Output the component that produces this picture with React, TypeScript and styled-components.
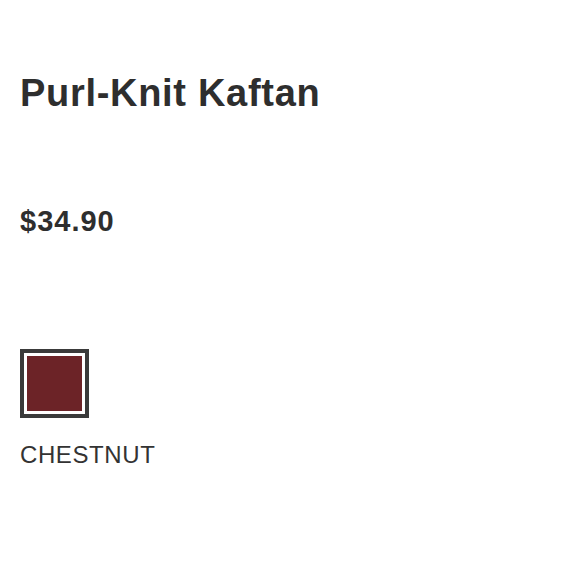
import React from "react";
import styled, { createGlobalStyle } from "styled-components";

const GlobalStyle = createGlobalStyle`
  html, body {
    margin: 0;
    padding: 0;
    background: #fff;
    font-family: "Liberation Sans", Arial, sans-serif;
    color: #333;
  }
`;

const Product = styled.div`
  display: flex;
  flex-direction: column;
  align-items: flex-start;
  padding: 74px 20px 0 20px;
`;

const Title = styled.h1`
  margin: 0;
  font-size: 38px;
  line-height: 38px;
  font-weight: 700;
  letter-spacing: 0.7px;
  color: #2e2e2e;
`;

const Price = styled.div`
  margin-top: 95px;
  font-size: 29px;
  line-height: 29px;
  font-weight: 700;
  letter-spacing: 1px;
  color: #2e2e2e;
`;

const Swatches = styled.div`
  display: flex;
  gap: 10px;
  margin-top: 113px;
`;

const Swatch = styled.button<{ $color: string; $selected?: boolean }>`
  box-sizing: border-box;
  width: 69px;
  height: 69px;
  padding: 3px;
  margin: 0;
  border: 4px solid ${(p) => (p.$selected ? "#3a3a3a" : "transparent")};
  background: #fff;
  cursor: pointer;

  &::after {
    content: "";
    display: block;
    width: 100%;
    height: 100%;
    background: ${(p) => p.$color};
  }
`;

const ColorName = styled.div`
  margin-top: 25px;
  font-size: 24px;
  line-height: 24px;
  letter-spacing: 0.6px;
  color: #333;
`;

export default function App(): JSX.Element {
  return (
    <>
      <GlobalStyle />
      <Product>
        <Title>Purl-Knit Kaftan</Title>
        <Price>$34.90</Price>
        <Swatches>
          <Swatch $color="#6c2327" $selected aria-label="Chestnut" />
        </Swatches>
        <ColorName>CHESTNUT</ColorName>
      </Product>
    </>
  );
}
